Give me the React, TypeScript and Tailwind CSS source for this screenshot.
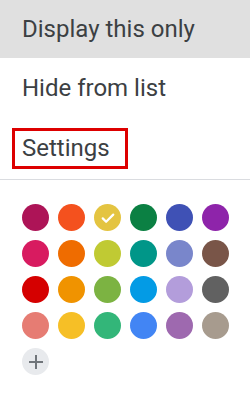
import React from 'react';

const rows = [
  ['#AD1457', '#F4511E', '#E4C441', '#0B8043', '#3F51B5', '#8E24AA'],
  ['#D81B60', '#EF6C00', '#C0CA33', '#009688', '#7986CB', '#795548'],
  ['#D50000', '#F09300', '#7CB342', '#039BE5', '#B39DDB', '#616161'],
  ['#E67C73', '#F6BF26', '#33B679', '#4285F4', '#9E69AF', '#A79B8E'],
];

export default function App() {
  return (
    <div className="w-[250px] h-[396px] bg-white overflow-hidden text-[#3c4043]" style={{ fontFamily: 'Roboto, "Liberation Sans", sans-serif' }}>
      {/* menu items */}
      <div className="h-[58px] bg-[#e0e0e0] flex items-center pl-[22px] text-[24px]">Display this only</div>
      <div className="h-[60px] flex items-center pl-[22px] text-[24px]">Hide from list</div>
      <div className="h-[60px] flex items-center pl-[12px] text-[24px]">
        <span className="border-[3px] border-[#dd0000] h-[41px] w-[116px] flex items-center pl-[7px]">Settings</span>
      </div>
      <div className="h-px bg-[#dadce0] mt-[1px]" />

      {/* colour palette */}
      <div className="pl-[22px] pt-[24px] flex flex-col gap-[9px]">
        {rows.map((row, i) => (
          <div key={i} className="flex gap-[9px]">
            {row.map((c) => (
              <div key={c} className="w-[27px] h-[27px] rounded-full flex items-center justify-center" style={{ backgroundColor: c }}>
                {c === '#E4C441' && (
                  <svg width="18" height="18" viewBox="0 0 24 24" fill="none" stroke="white" strokeWidth={3} strokeLinecap="round" strokeLinejoin="round">
                    <path d="M5 12.5l4.5 4.5L19 7.5" />
                  </svg>
                )}
              </div>
            ))}
          </div>
        ))}
        <div className="w-[27px] h-[27px] rounded-full bg-[#e8eaed] flex items-center justify-center">
          <svg width="16" height="16" viewBox="0 0 16 16" stroke="#70757a" strokeWidth={2}>
            <path d="M8 1v14M1 8h14" />
          </svg>
        </div>
      </div>
    </div>
  );
}
